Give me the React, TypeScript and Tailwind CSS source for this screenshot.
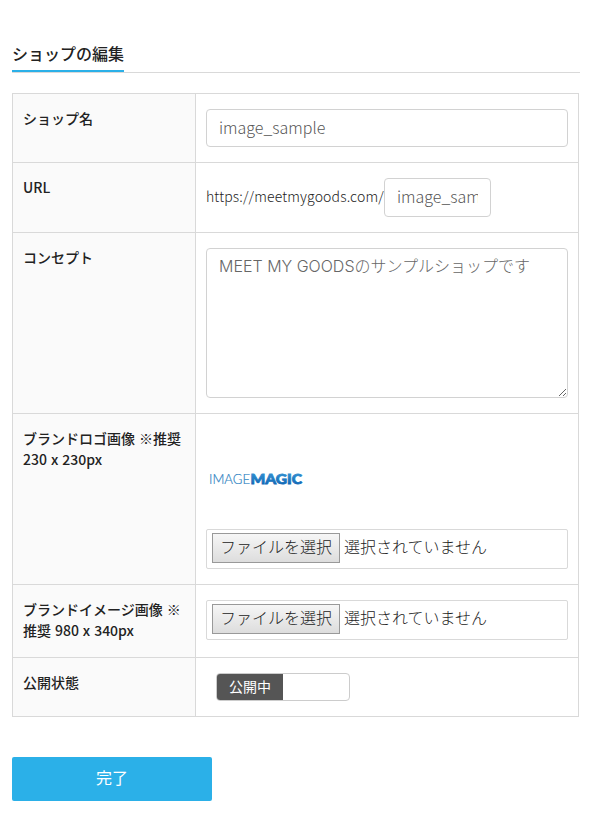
import { useState } from 'react';
import type { ReactNode } from 'react';

interface FieldRowProps {
  label: string;
  height: string;
  children: ReactNode;
}

function FieldRow({ label, height, children }: FieldRowProps) {
  return (
    <div className={`flex border-t border-[#d9d9d9] ${height}`}>
      <div className="w-[182px] shrink-0 bg-[#fafafa] pr-[9px] pl-[10px] pt-[14px] text-[14px] leading-[21px] font-medium [word-spacing:0.8px] text-[#222]">
        {label}
      </div>
      <div className="flex-1 border-l border-[#d9d9d9] px-[10px] pt-[15px]">{children}</div>
    </div>
  );
}

function FilePicker() {
  return (
    <div className="flex h-10 items-start rounded-[2px] border border-[#d9d9d9] px-[5px] pt-[3px] text-[16px] font-light text-[#222]">
      <button className="h-[30px] w-[128px] border border-[#999] bg-linear-to-b from-[#f6f6f6] to-[#dddddd] pb-[4px] leading-[24px] whitespace-nowrap">
        ファイルを選択
      </button>
      <span className="ml-1 leading-[26px]">選択されていません</span>
    </div>
  );
}

function BrandLogo() {
  return (
    <svg className="block" width="100" height="100" viewBox="0 0 100 100">
      <defs>
        <linearGradient id="logoBlue" x1="0" y1="0" x2="0" y2="1">
          <stop offset="0" stopColor="#3a9bd8" />
          <stop offset="1" stopColor="#0b5fb0" />
        </linearGradient>
      </defs>
      <text x="3" y="55" fontFamily="Lato, sans-serif" fontSize="14" fontWeight="300" fill="#2f83c2" stroke="#2f83c2" strokeWidth="0.2" textLength="41" lengthAdjust="spacingAndGlyphs">
        IMAGE
      </text>
      <text x="44.5" y="55" fontFamily="Lato, sans-serif" fontSize="14" fontWeight="900" fill="url(#logoBlue)" stroke="url(#logoBlue)" strokeWidth="0.8" textLength="51.5" lengthAdjust="spacingAndGlyphs">
        MAGIC
      </text>
    </svg>
  );
}

export default function App() {
  const [name, setName] = useState('image_sample');
  const [url, setUrl] = useState('image_sample');
  const [concept, setConcept] = useState('MEET MY GOODSのサンプルショップです');
  const [open, setOpen] = useState(true);

  return (
    <div className="h-[816px] bg-white pt-[40px] pl-3 font-['Noto_Sans_CJK_JP',sans-serif]">
      <div className="h-[33px] w-[568px] border-b border-[#d9d9d9]">
        <h1 className="inline-block h-8 border-b-2 border-[#2bb0e8] text-[16px] leading-[26px] font-medium text-[#222]">
          ショップの編集
        </h1>
      </div>

      <div className="mt-5 w-[567px] border-x border-b border-[#d9d9d9]">
        <FieldRow label="ショップ名" height="h-[69px]">
          <input
            value={name}
            onChange={(e) => setName(e.target.value)}
            className="block h-[38px] w-full rounded-[4px] border border-[#d2d2d2] px-3 pb-[3px] text-[16px] font-light text-[#555]"
          />
        </FieldRow>

        <FieldRow label="URL" height="h-[70px]">
          <div className="flex items-center">
            <span className="w-[178px] pb-[3px] text-[14px] font-light tracking-[0.14px] whitespace-nowrap text-[#222]">
              https://meetmygoods.com/
            </span>
            <input
              value={url}
              onChange={(e) => setUrl(e.target.value)}
              className="h-[39px] w-[107px] rounded-[4px] border border-[#d2d2d2] px-3 pb-[3px] text-[16px] font-light text-[#555]"
            />
          </div>
        </FieldRow>

        <FieldRow label="コンセプト" height="h-[181px]">
          <textarea
            value={concept}
            onChange={(e) => setConcept(e.target.value)}
            className="block h-[150px] w-full rounded-[4px] border border-[#d2d2d2] px-3 pt-[5px] font-['Inter','Noto_Sans_CJK_JP',sans-serif] text-[16px] leading-6 font-light text-[#666]"
          />
        </FieldRow>

        <FieldRow label="ブランドロゴ画像 ※推奨 230 x 230px" height="h-[171px]">
          <BrandLogo />
          <FilePicker />
        </FieldRow>

        <FieldRow label="ブランドイメージ画像 ※推奨 980 x 340px" height="h-[73px]">
          <FilePicker />
        </FieldRow>

        <FieldRow label="公開状態" height="h-[59px]">
          <button
            onClick={() => setOpen(!open)}
            className={`ml-[10px] flex h-7 w-[134px] overflow-hidden rounded-[4px] border border-[#ccc] bg-white ${open ? 'justify-start' : 'justify-end'}`}
          >
            <span className="h-full w-[66px] bg-[#555] text-[14px] leading-[24px] text-white">
              {open ? '公開中' : '非公開'}
            </span>
          </button>
        </FieldRow>
      </div>

      <button className="mt-10 block h-11 w-[200px] rounded-[2px] bg-[#2bb0e8] pb-1 text-[16px] leading-[38px] text-white">
        完了
      </button>
    </div>
  );
}
